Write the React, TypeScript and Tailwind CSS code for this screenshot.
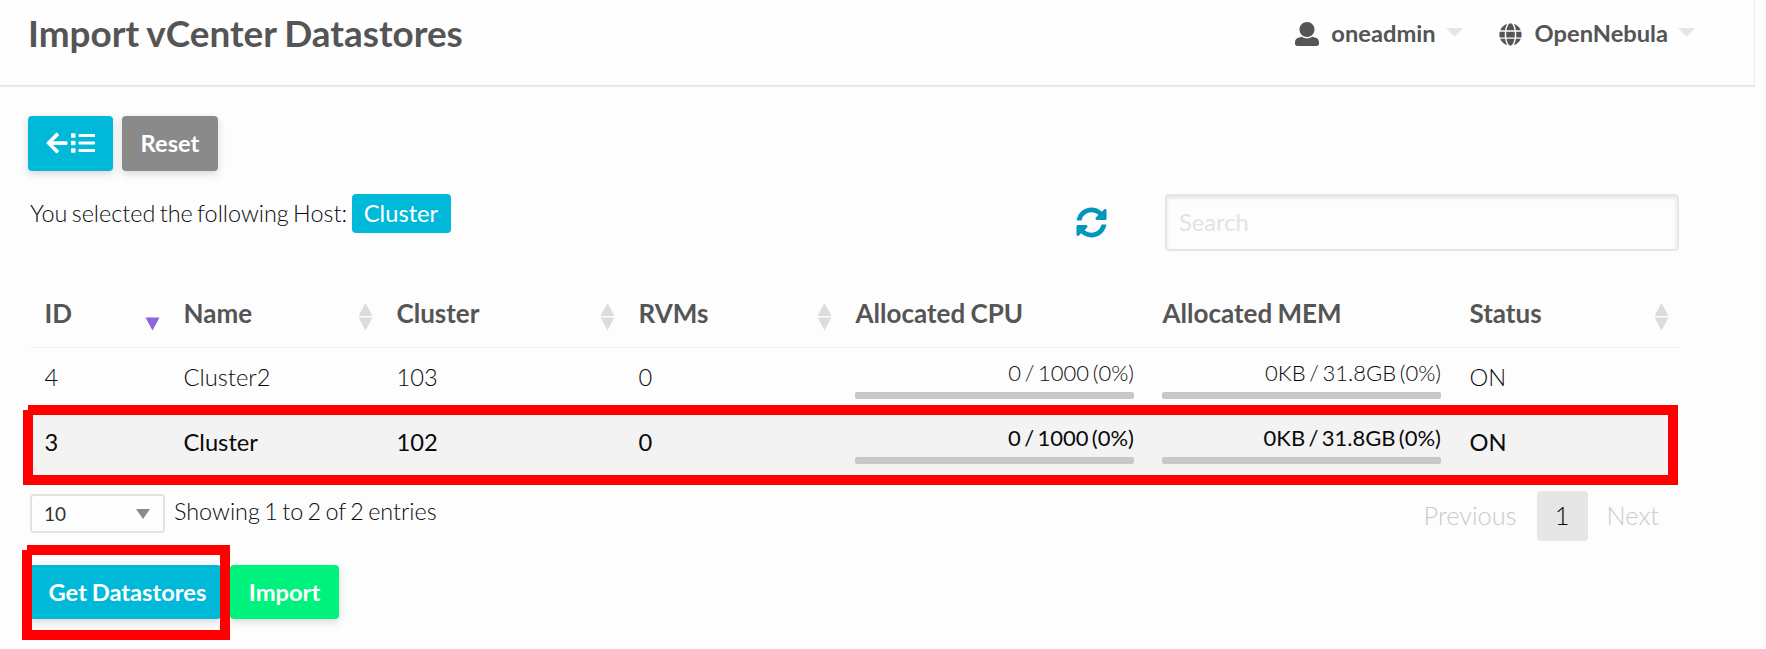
import React from "react";
import { FaArrowLeft, FaList, FaGlobe, FaSyncAlt } from "react-icons/fa";

const COLS = "grid grid-cols-[139px_213px_242px_217px_307px_307px_223px]";

function Caret() {
  return (
    <svg width="17" height="9" viewBox="0 0 17 9" className="mb-1 block fill-[#e6e6e6]">
      <path d="M0 0h17L8.500 9z" />
    </svg>
  );
}

function UserIcon() {
  return (
    <svg viewBox="0 0 512 512" className="mr-[12px] block size-[24px] fill-current">
      <path d="M256 0c88.366 0 160 71.634 160 160s-71.634 160-160 160S96 248.366 96 160 167.634 0 256 0zm183.283 333.821l-71.313-17.828c-74.923 53.890-165.738 41.864-223.940 0l-71.313 17.828C29.981 344.505 0 382.903 0 426.955V464c0 26.510 21.490 48 48 48h416c26.510 0 48-21.490 48-48v-37.045c0-44.052-29.981-82.450-72.717-93.134z" />
    </svg>
  );
}

function SortIcon({ active = false }: { active?: boolean }) {
  return (
    <svg width="15" height="28" viewBox="0 0 15 28" className="mt-[8px] block">
      {!active && <path d="M7.500 0L14.500 13H.5z" fill="#dcdcdc" />}
      <path d="M.5 14.500h14L7.500 27.500z" fill={active ? "#8c64e0" : "#dcdcdc"} />
    </svg>
  );
}

function Usage({ text }: { text: string }) {
  return (
    <div className="flex h-full flex-col px-[14px] pt-[11px]">
      <div className="h-[33px] text-right text-[22px] leading-[27px] [word-spacing:-2.300px]">{text}</div>
      <div className="h-[7px] rounded-[2px] bg-[#c8c8c8]" />
    </div>
  );
}

const HEADERS = [
  { label: "ID", sort: "active" },
  { label: "Name", sort: "both" },
  { label: "Cluster", sort: "both" },
  { label: "RVMs", sort: "both" },
  { label: "Allocated CPU", sort: "" },
  { label: "Allocated MEM", sort: "" },
  { label: "Status", sort: "both" },
];

const ROWS = [
  { id: "4", name: "Cluster2", cluster: "103", selected: false },
  { id: "3", name: "Cluster", cluster: "102", selected: true },
];

export default function App() {
  return (
    <div className="relative h-[649px] w-[1766px] overflow-hidden bg-[#fdfdfd] font-['Lato',sans-serif] font-light text-[#0a0a0a]">
      <header className="flex h-[86px] w-[1755px] justify-between border-r border-b border-r-[#eeeeee] border-b-[#dedede] bg-[#fefefe] pr-[59px] pl-[28px] text-[#555] shadow-[0_1px_1px_rgba(0,0,0,0.06)]">
        <h1 className="h-[66px] text-[36.900px] leading-[66px] font-bold [word-spacing:-1px]">Import vCenter Datastores</h1>
        <div className="flex h-[68px] items-center text-[23.700px] font-bold">
          <UserIcon />
          <span className="mr-[10px]">oneadmin</span>
          <Caret />
          <FaGlobe className="mr-[13px] ml-[36px] size-[23px]" />
          <span className="mr-[10px]">OpenNebula</span>
          <Caret />
        </div>
      </header>

      <main className="pt-[30px] pl-[28px]">
        <div className="flex gap-[9px] text-[23.700px] font-bold text-white">
          <button className="flex h-[55px] w-[85px] items-center justify-center gap-[2px] rounded-[4px] bg-[#00b9d8] pr-px pb-px shadow-[0_3px_8px_rgba(0,0,0,0.15)]">
            <FaArrowLeft className="size-[24px]" />
            <FaList className="size-[24px]" />
          </button>
          <button className="h-[55px] w-[96px] rounded-[4px] bg-[#8a8a8a] shadow-[0_3px_8px_rgba(0,0,0,0.15)]">Reset</button>
        </div>

        <div className="mt-[23px] flex h-[94px] items-start pl-[2px]">
          <span className="w-[322px] text-[23.400px] leading-[39px] whitespace-nowrap [word-spacing:-2px]">You selected the following Host:</span>
          <span className="flex h-[39px] w-[99px] items-center justify-center rounded-[4px] bg-[#00b9d8] pr-px text-[23.700px] font-normal text-white">
            Cluster
          </span>
          <FaSyncAlt className="mt-[13px] ml-[625px] size-[31px] text-[#0098b8]" />
          <div className="ml-[58px] flex h-[57px] w-[514px] items-center rounded-[4px] border-2 border-[#e6e6e6] pl-[12px] text-[23.700px] font-normal text-[#e3e3e3] shadow-[inset_0_2px_4px_rgba(10,10,10,0.1)]">
            Search
          </div>
        </div>

        <div className="w-[1650px] pl-[2px]">
          <div className={COLS + " h-[60px] border-b border-[#f0f0f0] text-[26px] font-bold text-[#555]"}>
            {HEADERS.map((h) => (
              <div key={h.label} className="flex h-[50px] items-center justify-between pr-[9px] pl-[14.500px] [word-spacing:-1px]">
                <span>{h.label}</span>
                {h.sort && <SortIcon active={h.sort === "active"} />}
              </div>
            ))}
          </div>
          {ROWS.map((r) => (
            <div
              key={r.id}
              className={COLS + " h-[65px] text-[23.700px] leading-[58px] " + (r.selected ? "bg-[#f3f3f3] font-normal" : "")}
            >
              <div className="pl-[14.500px]">{r.id}</div>
              <div className="pl-[14.500px]">{r.name}</div>
              <div className="pl-[14.500px]">{r.cluster}</div>
              <div className="pl-[14.500px]">0</div>
              <Usage text="0 / 1000 (0%)" />
              <Usage text="0KB / 31.8GB (0%)" />
              <div className="pl-[14.500px]">ON</div>
            </div>
          ))}
        </div>

        <div className="mt-[13px] flex h-[74px] w-[1650px] items-start pl-[2px]">
          <div className="mt-[3px] flex h-[39px] w-[135px] items-center justify-between rounded-[4px] border-2 border-[#e3e3e3] bg-[#fefefe] pr-[13px] pl-[12px] text-[19px] font-normal text-[#333]">
            <span className="pt-[2px]">10</span>
            <svg width="14" height="10" viewBox="0 0 14 10" className="block fill-[#8a8a8a]">
              <path d="M0 0h14L7 10z" />
            </svg>
          </div>
          <span className="ml-[9px] text-[23.400px] leading-[40px] [word-spacing:-2px]">Showing 1 to 2 of 2 entries</span>
          <div className="ml-auto flex h-[50px] items-center pr-[19px] text-[25.400px] text-[#cacaca]">
            <span className="pb-[2px]">Previous</span>
            <span className="mr-[19px] ml-[20px] flex h-[50px] w-[51px] items-center justify-center rounded-[4px] bg-[#e6e6e6] pb-[2px] text-[#0a0a0a]">1</span>
            <span className="pb-[2px]">Next</span>
          </div>
        </div>

        <div className="flex gap-[9px] text-[23.700px] font-bold text-white">
          <button className="h-[54px] w-[193px] rounded-[4px] bg-[#00b9d8] pt-[2px] shadow-[0_3px_8px_rgba(0,0,0,0.15)] [word-spacing:-1px]">
            <span className="pl-[6px]">Get Datastores</span>
          </button>
          <button className="h-[54px] w-[109px] rounded-[4px] bg-[#00f27e] pt-[2px] shadow-[0_3px_8px_rgba(0,0,0,0.15)]">Import</button>
        </div>
      </main>

      <svg width="1766" height="649" className="pointer-events-none absolute inset-0" fill="none" stroke="#f00" strokeWidth="10">
        <path d="M28 410H1673V480H28V410" />
        <path d="M27 550H225V635H27V550" />
      </svg>
    </div>
  );
}
